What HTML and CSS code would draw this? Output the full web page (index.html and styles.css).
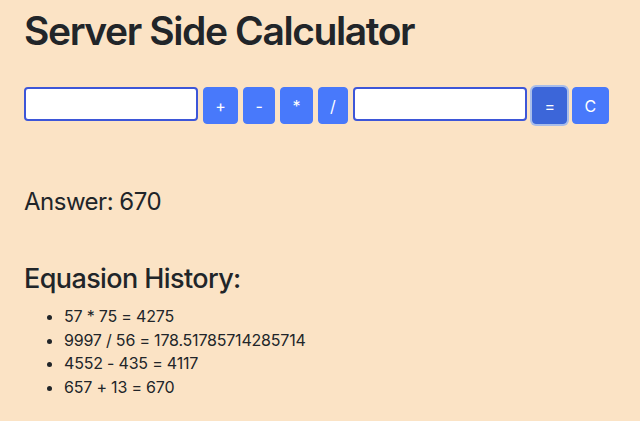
FILE: index.html
```html
<!DOCTYPE html>
<html lang="en">
<head>
<meta charset="utf-8">
<title>Server Side Calculator</title>
<link rel="stylesheet" href="styles.css">
</head>
<body>
<main class="page">
  <h1 class="title">Server Side Calculator</h1>
  <form class="calc">
    <input class="num" type="text">
    <button type="button" class="btn">+</button>
    <button type="button" class="btn">-</button>
    <button type="button" class="btn">*</button>
    <button type="button" class="btn">/</button>
    <input class="num" type="text">
    <button type="button" class="btn btn-active">=</button>
    <button type="button" class="btn">C</button>
  </form>
  <h4 class="answer">Answer: 670</h4>
  <h3 class="history-title">Equasion History:</h3>
  <ul class="history">
    <li>57 * 75 = 4275</li>
    <li>9997 / 56 = 178.51785714285714</li>
    <li>4552 - 435 = 4117</li>
    <li>657 + 13 = 670</li>
  </ul>
</main>
</body>
</html>
```

FILE: styles.css
```css
html, body {
  margin: 0;
  padding: 0;
  background: #fbe3c5;
}
body {
  font-family: Inter, "Noto Sans", sans-serif;
  color: #212529;
  font-size: 16px;
  line-height: 1.5;
}
.page {
  padding: 0 24px;
}
.title {
  font-size: 39px;
  line-height: 48px;
  font-weight: 600;
  margin: 7px 0 0;
  letter-spacing: -1.4px;
}
.calc {
  display: flex;
  align-items: flex-start;
  gap: 5px;
  margin-top: 32px;
}
.num {
  box-sizing: border-box;
  width: 174px;
  height: 34px;
  border: 2px solid #3d56d8;
  border-radius: 4px;
  background: #fff;
  padding: 0 6px;
  font: inherit;
}
.btn {
  box-sizing: border-box;
  height: 37px;
  padding: 0 11.3px;
  border: 1px solid #4879fb;
  border-radius: 4px;
  background: #4879fb;
  color: #fff;
  font-family: Inter, "Noto Sans", sans-serif;
  font-size: 16px;
  font-weight: 400;
  line-height: 24px;
}
.btn-active {
  background: #3c66d9;
  border-color: #3c66d9;
  box-shadow: 0 0 0 2px #a8bdea;
}
.answer {
  font-size: 24px;
  line-height: 28.8px;
  font-weight: 400;
  letter-spacing: -0.5px;
  margin: 64px 0 0;
}
.history-title {
  font-size: 27px;
  line-height: 33.6px;
  font-weight: 500;
  letter-spacing: -0.6px;
  margin: 45px 0 10px;
}
.history {
  margin: 0;
  padding-left: 40px;
  letter-spacing: -0.2px;
}
.history li {
  line-height: 23.5px;
}
```
